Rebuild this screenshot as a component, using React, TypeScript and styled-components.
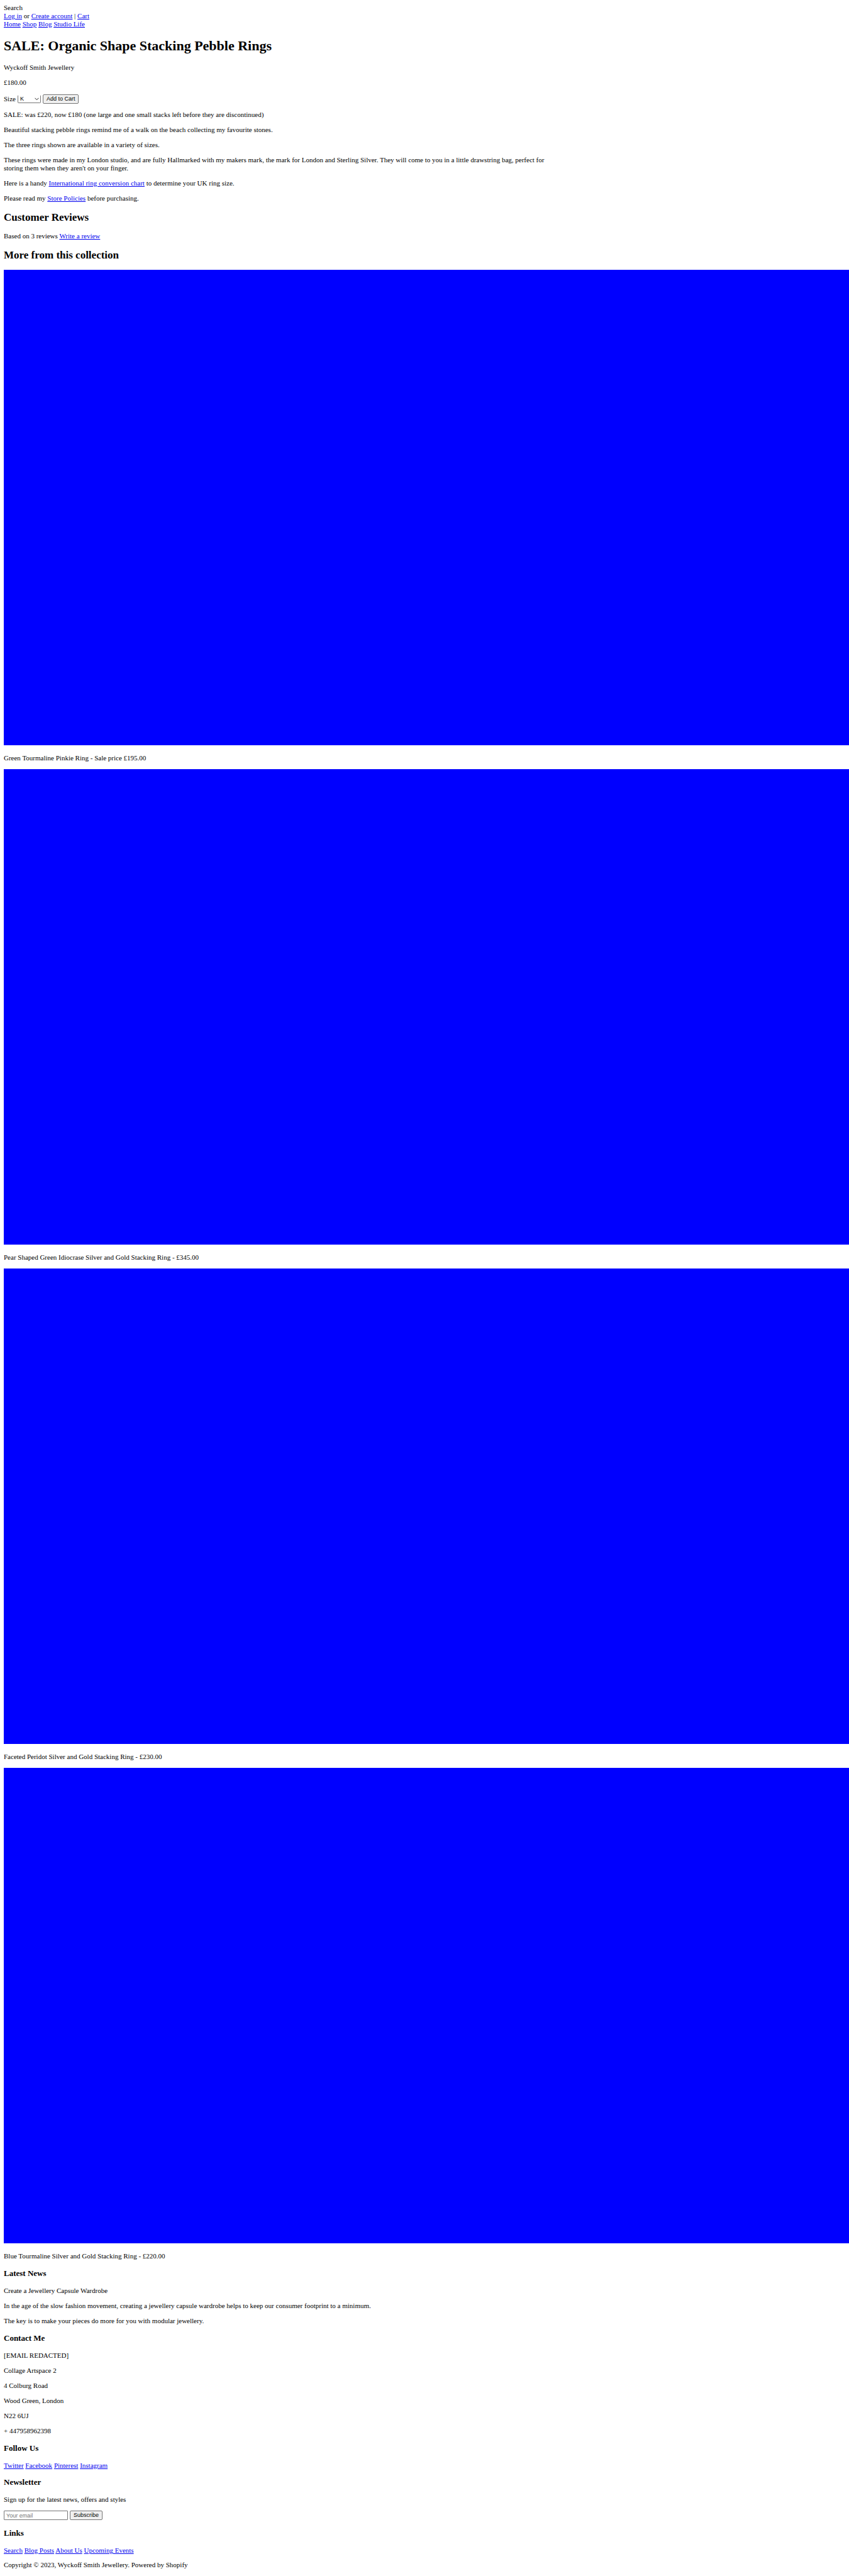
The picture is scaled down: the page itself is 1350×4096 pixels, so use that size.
import React from "react";
import styled, { createGlobalStyle } from "styled-components";

const GlobalStyle = createGlobalStyle`
  body {
    margin: 0;
    background: #fff;
    color: #000;
    font: 11px/13px "Liberation Serif", "Times New Roman", serif;
    overflow-x: hidden;
  }
`;

const Page = styled.div`
  padding: 6px 6px 0;
`;

const Link = styled.a`
  color: #0000ee;
  text-decoration: underline;
`;

const Title = styled.h1`
  margin: 15px 0;
  font-size: 22px;
  line-height: 26px;
`;

const SectionTitle = styled.h2`
  margin: 14px 0;
  font-size: 17px;
  line-height: 19px;
`;

const FooterTitle = styled.h3`
  margin: 13px 0;
  font-size: 13px;
  line-height: 16px;
`;

const Text = styled.p`
  margin: 11px 0;
`;

const Description = styled.div`
  max-width: 66%;
`;

const ControlRow = styled.form`
  display: flex;
  align-items: center;
  gap: 3px;
  margin: 11px 0;
`;

const SizeLabel = styled.label`
  line-height: 16px;
`;

const NewsletterLabel = styled.label`
  display: block;
`;

const SelectBox = styled.span`
  position: relative;
  display: flex;
`;

const SizeSelect = styled.select`
  appearance: none;
  box-sizing: border-box;
  width: 37px;
  height: 13px;
  padding: 0 3px;
  border: 1px solid #767676;
  border-top-color: transparent;
  border-radius: 2px;
  background: #fff;
  color: #000;
  font: 9px/11px "Liberation Sans", Arial, sans-serif;
`;

const Chevron = styled.svg`
  position: absolute;
  top: 4px;
  right: 3px;
  width: 7px;
  height: 5px;
  fill: none;
  stroke: #222;
  pointer-events: none;
`;

const Button = styled.button`
  box-sizing: border-box;
  height: 15px;
  padding: 0 5px;
  border: 1px solid #767676;
  border-radius: 2px;
  background: #efefef;
  color: #000;
  font: 9px/11px "Liberation Sans", Arial, sans-serif;
`;

const EmailInput = styled.input`
  box-sizing: border-box;
  width: 102px;
  height: 15px;
  padding: 0 3px;
  border: 1px solid #767676;
  border-radius: 1px;
  background: #fff;
  font: 9px/11px "Liberation Sans", Arial, sans-serif;

  &::placeholder {
    color: #757575;
    opacity: 1;
  }
`;

const ProductImage = styled.div`
  aspect-ratio: 16 / 9;
  margin: 0 -6px 14px 0;
  background: #00f;
`;

const FooterLinks = styled.nav`
  margin: 11px 0;
  line-height: 12px;
`;

const products = [
  "Green Tourmaline Pinkie Ring - Sale price £195.00",
  "Pear Shaped Green Idiocrase Silver and Gold Stacking Ring - £345.00",
  "Faceted Peridot Silver and Gold Stacking Ring - £230.00",
  "Blue Tourmaline Silver and Gold Stacking Ring - £220.00",
];

const contactLines = [
  "[EMAIL REDACTED]",
  "Collage Artspace 2",
  "4 Colburg Road",
  "Wood Green, London",
  "N22 6UJ",
  "+ 447958962398",
];

function LinkList({ items }: { items: string[] }) {
  return (
    <>
      {items.map((item) => (
        <React.Fragment key={item}>
          <Link href="#">{item}</Link>{" "}
        </React.Fragment>
      ))}
    </>
  );
}

export default function App() {
  return (
    <Page>
      <GlobalStyle />
      <header>
        <div>Search</div>
        <div>
          <Link href="#">Log in</Link> or <Link href="#">Create account</Link> |{" "}
          <Link href="#">Cart</Link>
        </div>
        <nav>
          <LinkList items={["Home", "Shop", "Blog", "Studio Life"]} />
        </nav>
      </header>
      <main>
        <Title>SALE: Organic Shape Stacking Pebble Rings</Title>
        <Text>Wyckoff Smith Jewellery</Text>
        <Text>£180.00</Text>
        <ControlRow>
          <SizeLabel htmlFor="size">Size</SizeLabel>
          <SelectBox>
            <SizeSelect id="size" defaultValue="K">
              <option>K</option>
            </SizeSelect>
            <Chevron viewBox="0 0 7 5" aria-hidden="true">
              <path d="M0.5 0.8 L3.5 3.8 L6.5 0.8" />
            </Chevron>
          </SelectBox>
          <Button type="button">Add to Cart</Button>
        </ControlRow>
        <Description>
          <Text>SALE: was £220, now £180 (one large and one small stacks left before they are discontinued)</Text>
          <Text>Beautiful stacking pebble rings remind me of a walk on the beach collecting my favourite stones.</Text>
          <Text>The three rings shown are available in a variety of sizes.</Text>
          <Text>
            These rings were made in my London studio, and are fully Hallmarked with my makers mark, the mark for
            London and Sterling Silver. They will come to you in a little drawstring bag, perfect for storing them
            when they aren't on your finger.
          </Text>
          <Text>
            Here is a handy <Link href="#">International ring conversion chart</Link> to determine your UK ring size.
          </Text>
          <Text>
            Please read my <Link href="#">Store Policies</Link> before purchasing.
          </Text>
        </Description>
        <SectionTitle>Customer Reviews</SectionTitle>
        <div>
          Based on 3 reviews <Link href="#">Write a review</Link>
        </div>
        <SectionTitle>More from this collection</SectionTitle>
        {products.map((product) => (
          <article key={product}>
            <ProductImage />
            <Text>{product}</Text>
          </article>
        ))}
      </main>
      <footer>
        <FooterTitle>Latest News</FooterTitle>
        <Text>Create a Jewellery Capsule Wardrobe</Text>
        <Text>
          In the age of the slow fashion movement, creating a jewellery capsule wardrobe helps to keep our consumer
          footprint to a minimum.
        </Text>
        <Text>The key is to make your pieces do more for you with modular jewellery.</Text>
        <FooterTitle>Contact Me</FooterTitle>
        {contactLines.map((line) => (
          <Text key={line}>{line}</Text>
        ))}
        <FooterTitle>Follow Us</FooterTitle>
        <FooterLinks>
          <LinkList items={["Twitter", "Facebook", "Pinterest", "Instagram"]} />
        </FooterLinks>
        <FooterTitle>Newsletter</FooterTitle>
        <NewsletterLabel htmlFor="email">Sign up for the latest news, offers and styles</NewsletterLabel>
        <ControlRow>
          <EmailInput id="email" type="email" placeholder="Your email" />
          <Button type="button">Subscribe</Button>
        </ControlRow>
        <FooterTitle>Links</FooterTitle>
        <FooterLinks>
          <LinkList items={["Search", "Blog Posts", "About Us", "Upcoming Events"]} />
        </FooterLinks>
        <Text>Copyright © 2023, Wyckoff Smith Jewellery. Powered by Shopify</Text>
      </footer>
    </Page>
  );
}
